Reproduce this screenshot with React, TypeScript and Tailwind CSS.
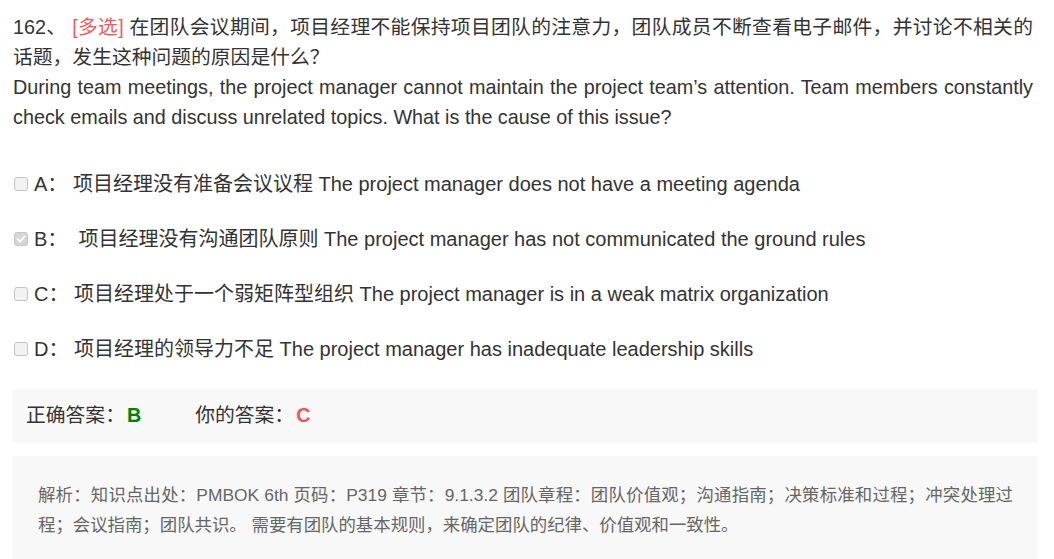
export default function App() {
  const font = { fontFamily: '"Liberation Sans", "Noto Sans CJK SC", sans-serif' };
  const options = [
    { k: "A", t: "项目经理没有准备会议议程 The project manager does not have a meeting agenda", checked: false, pre: "" },
    { k: "B", t: "项目经理没有沟通团队原则 The project manager has not communicated the ground rules", checked: true, pre: " " },
    { k: "C", t: "项目经理处于一个弱矩阵型组织 The project manager is in a weak matrix organization", checked: false, pre: "" },
    { k: "D", t: "项目经理的领导力不足 The project manager has inadequate leadership skills", checked: false, pre: "" },
  ];
  return (
    <div className="w-[1054px] h-[559px] overflow-hidden bg-white text-[#333]" style={font}>
      <div className="ml-[13px] w-[1025px] pt-[12px]">
        <div className="mr-[5px] text-[19.8px] leading-[30px]">
          <div className="text-justify [text-align-last:justify] whitespace-nowrap">
            162、 <span className="text-[#f25a5a]">[多选]</span> 在团队会议期间，项目经理不能保持项目团队的注意力，团队成员不断查看电子邮件，并讨论不相关的
          </div>
          <div>话题，发生这种问题的原因是什么？</div>
          <div className="text-justify">
            During team meetings, the project manager cannot maintain the project team’s attention. Team members constantly check emails and discuss unrelated topics. What is the cause of this issue?
          </div>
        </div>
        <div className="mt-[24px]">
          {options.map((o) => (
            <div key={o.k} className="h-[55px] flex items-center text-[20px]">
              <span
                className={
                  o.checked
                    ? "w-[14px] h-[14px] ml-[1px] mr-[6px] rounded-[3px] border border-[#c4c4c4] bg-[#d6d6d6] flex items-center justify-center"
                    : "w-[14px] h-[14px] ml-[1px] mr-[6px] rounded-[3px] border border-[#c4c4c4] bg-[#f2f2f2]"
                }
              >
                {o.checked && (
                  <svg width="10" height="10" viewBox="0 0 10 10">
                    <path d="M1.5 5.2 L4 7.6 L8.6 2.4" fill="none" stroke="#ffffff" strokeWidth="1.8" strokeLinecap="round" strokeLinejoin="round" />
                  </svg>
                )}
              </span>
              <span className="whitespace-pre">{o.k}： {o.pre}{o.t}</span>
            </div>
          ))}
        </div>
        <div className="mt-[13px] h-[54px] bg-[#f8f8f8] flex items-center px-[13px] text-[19.8px]">
          <span>正确答案：</span>
          <span className="font-bold text-[#008000] ml-[2px]">B</span>
          <span className="ml-[54px]">你的答案：</span>
          <span className="font-bold text-[#f55555] ml-[2px]">C</span>
        </div>
        <div className="mt-[13px] h-[120px] bg-[#f8f8f8] pt-[24px] px-[25px] text-[17.4px] leading-[30px] text-[#666] text-justify">
          解析：知识点出处：PMBOK 6th 页码：P319 章节：9.1.3.2 团队章程：团队价值观；沟通指南；决策标准和过程；冲突处理过程；会议指南；团队共识。 需要有团队的基本规则，来确定团队的纪律、价值观和一致性。
        </div>
      </div>
    </div>
  );
}
